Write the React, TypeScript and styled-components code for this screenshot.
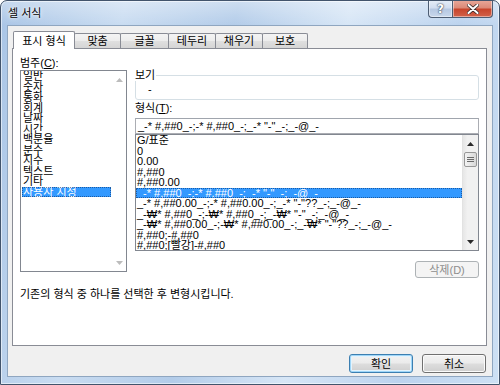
import React from 'react';
import styled, { createGlobalStyle } from 'styled-components';

const FONT = `"Liberation Sans", "Noto Sans CJK KR", sans-serif`;
const LIST_FONT = `"Liberation Sans", "DejaVu Sans", "Noto Sans CJK KR", sans-serif`;

const Global = createGlobalStyle`
  html, body { margin: 0; padding: 0; }
  body { background: #ffffff; font-family: ${FONT}; font-size: 11px; color: #000; }
  * { box-sizing: border-box; }
`;

const Window = styled.div`
  width: 500px;
  height: 385px;
  display: flex;
  flex-direction: column;
  border: 1px solid #42546c;
  border-radius: 7px 7px 0 0;
  padding: 0 6px 7px 6px;
  background:
    linear-gradient(180deg, rgba(255, 255, 255, 0.35) 0px, rgba(255, 255, 255, 0) 24px),
    linear-gradient(100deg, #a9c5e6 0%, #c9dcf1 22%, #b3cce9 42%, #d7e6f6 62%, #bcd3ee 82%, #cde0f4 100%);
  box-shadow: inset 0 0 0 1px rgba(255, 255, 255, 0.55);
  overflow: hidden;
`;

const TitleBar = styled.div`
  height: 24px;
  display: flex;
  align-items: flex-start;
  justify-content: space-between;
`;

const Title = styled.span`
  padding: 6px 0 0 1px;
  font-size: 11px;
  line-height: 13px;
  color: #000;
  text-shadow: 0 0 5px rgba(255, 255, 255, 0.95), 0 0 2px rgba(255, 255, 255, 0.9);
`;

const Controls = styled.div`
  display: flex;
  margin-top: -1px;
`;

const CaptionButton = styled.div<{ $kind: 'help' | 'close' }>`
  width: ${(p) => (p.$kind === 'close' ? 41 : 24)}px;
  height: 18px;
  display: flex;
  align-items: center;
  justify-content: center;
  border: 1px solid #4d5d73;
  border-top: none;
  ${(p) => (p.$kind === 'help' ? 'border-right: none;' : '')}
  border-radius: ${(p) => (p.$kind === 'close' ? '0 0 4px 0' : '0 0 0 4px')};
  background: ${(p) =>
    p.$kind === 'close'
      ? 'linear-gradient(180deg, #e9a99b 0%, #dc8a78 45%, #c8452c 55%, #d2624a 100%)'
      : 'linear-gradient(180deg, #e6eef8 0%, #d2def0 45%, #b6c8e2 55%, #c9d8ec 100%)'};
  box-shadow: inset 0 0 0 1px rgba(255, 255, 255, 0.45);
  color: #fff;
  font-family: "DejaVu Sans", sans-serif;
  font-weight: bold;
  font-size: 12px;
  line-height: 14px;
  text-shadow: 0 0 2px #2b3a4f, 0 0 1px #2b3a4f;
`;

const Client = styled.div`
  flex: 1;
  display: flex;
  flex-direction: column;
  background: #f0f0f0;
  border: 1px solid #8fa6c0;
  padding: 5px 5px 0 4px;
`;

const TabStrip = styled.div`
  height: 18px;
  display: flex;
  align-items: flex-end;
  margin-bottom: -1px;
  padding-left: 2px;
  position: relative;
  z-index: 1;
`;

const Tab = styled.div<{ $active?: boolean; $w: number }>`
  width: ${(p) => p.$w}px;
  height: ${(p) => (p.$active ? 18 : 15)}px;
  margin-bottom: ${(p) => (p.$active ? 0 : 1)}px;
  margin-left: -1px;
  display: flex;
  align-items: center;
  justify-content: center;
  border: 1px solid #898c95;
  border-bottom: none;
  border-radius: 2px 2px 0 0;
  background: ${(p) =>
    p.$active ? '#ffffff' : 'linear-gradient(180deg, #f4f4f4 0%, #ececec 50%, #dfdfdf 52%, #d5d5d5 100%)'};
  font-size: 11px;
  line-height: 12px;
  padding-top: ${(p) => (p.$active ? 1 : 0)}px;
  position: relative;
  z-index: ${(p) => (p.$active ? 2 : 1)};
`;

const Panel = styled.div`
  height: 298px;
  background: #ffffff;
  border: 1px solid #898c95;
  padding: 7px 6px 0 7px;
  display: flex;
  flex-direction: column;
`;

const Columns = styled.div`
  display: grid;
  grid-template-columns: 107px 344px;
  column-gap: 8px;
  align-items: start;
`;

const Column = styled.div`
  display: flex;
  flex-direction: column;
`;

const FieldLabel = styled.div<{ $mt?: number }>`
  height: 14px;
  line-height: 14px;
  font-size: 11px;
  margin-top: ${(p) => p.$mt ?? 0}px;
`;

const U = styled.span`
  text-decoration: underline;
`;

const ListBox = styled.div<{ $h: number }>`
  height: ${(p) => p.$h}px;
  display: flex;
  border: 1px solid #828790;
  background: #fff;
  overflow: hidden;
`;

const Items = styled.div<{ $pl: number }>`
  flex: 1;
  min-width: 0;
  padding-left: ${(p) => p.$pl}px;
  overflow: hidden;
`;

const Item = styled.div<{ $sel?: boolean; $size: number }>`
  height: 10.5px;
  line-height: 10.5px;
  font-family: ${LIST_FONT};
  font-size: ${(p) => p.$size}px;
  padding-left: 1px;
  white-space: nowrap;
  overflow: visible;
  background: ${(p) => (p.$sel ? '#3399ff' : 'transparent')};
  color: ${(p) => (p.$sel ? '#ffffff' : '#000000')};
  outline: ${(p) => (p.$sel ? '1px dotted rgba(10, 40, 90, 0.55)' : 'none')};
  outline-offset: -1px;
  position: relative;
  z-index: ${(p) => (p.$sel ? 0 : 1)};
`;

const ScrollBar = styled.div<{ $w: number; $disabled?: boolean }>`
  width: ${(p) => p.$w}px;
  display: flex;
  flex-direction: column;
  justify-content: space-between;
  background: ${(p) => (p.$disabled ? '#ffffff' : 'linear-gradient(90deg, #e6e6e6 0%, #f1f1f1 30%, #f1f1f1 100%)')};
  border-left: 1px solid ${(p) => (p.$disabled ? '#ffffff' : '#e2e2e2')};
`;

const ScrollTop = styled.div`
  display: flex;
  flex-direction: column;
`;

const ArrowCell = styled.div`
  height: 17px;
  display: flex;
  align-items: center;
  justify-content: center;
`;

const Thumb = styled.div`
  height: 15px;
  margin: 0 1px;
  border: 1px solid #979797;
  border-radius: 2px;
  background: linear-gradient(90deg, #f3f3f3 0%, #e6e6e6 50%, #d8d8d8 100%);
  display: flex;
  flex-direction: column;
  align-items: center;
  justify-content: center;
  gap: 1px;
`;

const Grip = styled.div`
  width: 7px;
  height: 1px;
  background: #6a6a6a;
`;

const Arrow = ({ up, color }: { up?: boolean; color: string }) => (
  <svg width="7" height="4" viewBox="0 0 7 4">
    <path d={up ? 'M0 4 L3.5 0 L7 4 Z' : 'M0 0 L3.5 4 L7 0 Z'} fill={color} />
  </svg>
);

const GroupBox = styled.fieldset`
  margin: 13px 0 0 0;
  padding: 0;
  border: 1px solid #d5dfe5;
  border-radius: 3px;
  min-width: 0;
`;

const Legend = styled.legend`
  padding: 0 1px 0 0;
  margin-left: -1px;
  font-size: 11px;
  line-height: 12px;
`;

const PreviewValue = styled.div`
  height: 18px;
  line-height: 16px;
  padding-left: 12px;
  font-size: 11px;
`;

const TextInput = styled.div`
  margin-top: 3px;
  height: 16px;
  border: 1px solid #abadb3;
  border-top-color: #a0a5ad;
  background: #fff;
  padding-left: 2px;
  font-size: 11px;
  line-height: 14px;
  white-space: nowrap;
  overflow: hidden;
`;

const DeleteButton = styled.div`
  align-self: flex-end;
  margin-top: 10px;
  width: 64px;
  height: 17px;
  border: 1px solid #adb2b5;
  border-radius: 3px;
  background: #f4f4f4;
  color: #8d8d8d;
  display: flex;
  align-items: center;
  justify-content: center;
  font-size: 11px;
  line-height: 12px;
`;

const Hint = styled.div`
  margin-top: 10px;
  height: 13px;
  line-height: 13px;
  font-size: 11px;
`;

const Footer = styled.div`
  display: flex;
  justify-content: flex-end;
  gap: 9px;
  padding-top: 8px;
  margin-right: 1px;
`;

const DialogButton = styled.div<{ $default?: boolean }>`
  width: 64px;
  height: 19px;
  border: 1px solid ${(p) => (p.$default ? '#3c7fb1' : '#707070')};
  border-radius: 3px;
  background: linear-gradient(180deg, #f2f2f2 0%, #ebebeb 48%, #dddddd 52%, #cfcfcf 100%);
  box-shadow: ${(p) =>
    p.$default ? 'inset 0 0 0 1px #9fd6f8, inset 0 0 0 2px #e4f3fc' : 'inset 0 0 0 1px #fbfbfb'};
  display: flex;
  align-items: center;
  justify-content: center;
  font-size: 11px;
  line-height: 12px;
  color: #000;
`;

const CATEGORIES = ['일반', '숫자', '통화', '회계', '날짜', '시간', '백분율', '분수', '지수', '텍스트', '기타', '사용자 지정'];

const FORMATS = [
  'G/표준',
  '0',
  '0.00',
  '#,##0',
  '#,##0.00',
  '_-* #,##0_-;-* #,##0_-;_-* "-"_-;_-@_-',
  '_-* #,##0.00_-;-* #,##0.00_-;_-* "-"??_-;_-@_-',
  '_-₩* #,##0_-;-₩* #,##0_-;_-₩* "-"_-;_-@_-',
  '_-₩* #,##0.00_-;-₩* #,##0.00_-;_-₩* "-"??_-;_-@_-',
  '#,##0;-#,##0',
  '#,##0;[빨강]-#,##0',
];

const TABS: { label: string; w: number }[] = [
  { label: '표시 형식', w: 62 },
  { label: '맞춤', w: 47 },
  { label: '글꼴', w: 49 },
  { label: '테두리', w: 48 },
  { label: '채우기', w: 48 },
  { label: '보호', w: 46 },
];

export default function App() {
  return (
    <>
      <Global />
      <Window>
        <TitleBar>
          <Title>셀 서식</Title>
          <Controls>
            <CaptionButton $kind="help">?</CaptionButton>
            <CaptionButton $kind="close">
              <svg width="12" height="10" viewBox="0 0 12 10">
                <path d="M1.5 1 L10.5 9 M10.5 1 L1.5 9" stroke="#3b2a2a" strokeWidth="3.6" strokeLinecap="round" />
                <path d="M1.5 1 L10.5 9 M10.5 1 L1.5 9" stroke="#ffffff" strokeWidth="2" strokeLinecap="round" />
              </svg>
            </CaptionButton>
          </Controls>
        </TitleBar>
        <Client>
          <TabStrip>
            {TABS.map((t, i) => (
              <Tab key={t.label} $w={t.w} $active={i === 0}>
                {t.label}
              </Tab>
            ))}
          </TabStrip>
          <Panel>
            <Columns>
              <Column>
                <FieldLabel>
                  범주(<U>C</U>):
                </FieldLabel>
                <ListBox $h={202}>
                  <Items $pl={1}>
                    {CATEGORIES.map((c, i) => (
                      <Item key={c} $size={11} $sel={i === CATEGORIES.length - 1}>
                        {c}
                      </Item>
                    ))}
                  </Items>
                  <ScrollBar $w={15} $disabled>
                    <ArrowCell>
                      <Arrow up color="#bcbcbc" />
                    </ArrowCell>
                    <ArrowCell>
                      <Arrow color="#bcbcbc" />
                    </ArrowCell>
                  </ScrollBar>
                </ListBox>
              </Column>
              <Column>
                <GroupBox>
                  <Legend>보기</Legend>
                  <PreviewValue>-</PreviewValue>
                </GroupBox>
                <FieldLabel $mt={1}>
                  형식(<U>T</U>):
                </FieldLabel>
                <TextInput>{'_-* #,##0_-;-* #,##0_-;_-* "-"_-;_-@_-'}</TextInput>
                <ListBox $h={117}>
                  <Items $pl={0}>
                    {FORMATS.map((f, i) => (
                      <Item key={f} $size={11} $sel={i === 5}>
                        {f}
                      </Item>
                    ))}
                  </Items>
                  <ScrollBar $w={16}>
                    <ScrollTop>
                      <ArrowCell>
                        <Arrow up color="#2a2a2a" />
                      </ArrowCell>
                      <Thumb>
                        <Grip />
                        <Grip />
                        <Grip />
                      </Thumb>
                    </ScrollTop>
                    <ArrowCell>
                      <Arrow color="#2a2a2a" />
                    </ArrowCell>
                  </ScrollBar>
                </ListBox>
                <DeleteButton>삭제(D)</DeleteButton>
              </Column>
            </Columns>
            <Hint>기존의 형식 중 하나를 선택한 후 변형시킵니다.</Hint>
          </Panel>
          <Footer>
            <DialogButton $default>확인</DialogButton>
            <DialogButton>취소</DialogButton>
          </Footer>
        </Client>
      </Window>
    </>
  );
}
